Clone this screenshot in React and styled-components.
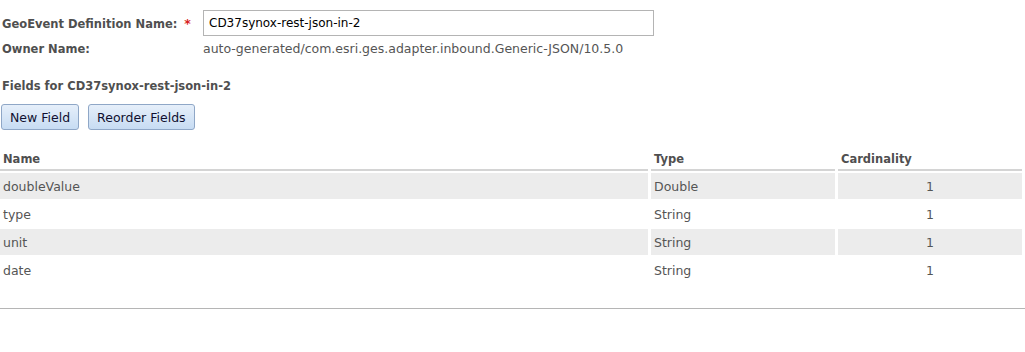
import React from 'react';
import styled, { createGlobalStyle } from 'styled-components';

const GlobalStyle = createGlobalStyle`
  body {
    margin: 0;
    background: #ffffff;
    font-family: "DejaVu Sans", Verdana, sans-serif;
  }
`;

const Page = styled.div`
  width: 1025px;
  height: 352px;
  padding-top: 10px;
  box-sizing: border-box;
  color: #555555;
  font-size: 12.5px;
`;

const FormGrid = styled.div`
  display: grid;
  grid-template-columns: 201px 451px;
  row-gap: 5px;
  padding-left: 2px;
  align-items: center;
`;

const Label = styled.div`
  font-weight: bold;
  font-size: 11.5px;
  color: #4f4f4f;
`;

const Required = styled.span`
  color: #d81e1e;
  margin-left: 7px;
  font-size: 12.5px;
`;

const TextInput = styled.input`
  height: 26px;
  box-sizing: border-box;
  border: 1px solid #b4b4b4;
  padding: 0 5px;
  font-family: inherit;
  font-size: 12px;
  color: #000000;
  outline: none;
`;

const Value = styled.div`
  color: #555555;
`;

const SectionTitle = styled.div`
  font-weight: bold;
  font-size: 11.5px;
  color: #4f4f4f;
  margin: 23px 0 0 2px;
`;

const ButtonBar = styled.div`
  display: flex;
  gap: 9px;
  margin: 11px 0 0 1px;
`;

const Button = styled.button`
  height: 26px;
  padding: 0 8px;
  border: 1px solid #8fa7c7;
  border-radius: 3px;
  background: linear-gradient(#e6effa, #c7dcf3);
  font-family: inherit;
  font-size: 12.5px;
  color: #101030;
`;

const Table = styled.div`
  display: grid;
  grid-template-columns: 648px 184px 184px;
  column-gap: 3px;
  row-gap: 2px;
  margin-top: 22px;
  width: 1022px;
`;

const HeadCell = styled.div`
  font-weight: bold;
  font-size: 11.5px;
  color: #4f4f4f;
  padding: 0 3px 3px;
  border-bottom: 2px solid #d4d4d4;
`;

const Cell = styled.div`
  height: 26px;
  display: flex;
  align-items: center;
  justify-content: ${p => (p.$center ? 'center' : 'flex-start')};
  padding: 0 3px;
  background: ${p => (p.$shaded ? '#ececec' : '#ffffff')};
`;

const Footer = styled.div`
  margin-top: 25px;
  border-top: 1px solid #b5b5b5;
`;

const fields = [
  { name: 'doubleValue', type: 'Double', cardinality: 1 },
  { name: 'type', type: 'String', cardinality: 1 },
  { name: 'unit', type: 'String', cardinality: 1 },
  { name: 'date', type: 'String', cardinality: 1 },
];

export default function App() {
  const defName = 'CD37synox-rest-json-in-2';
  return (
    <Page>
      <GlobalStyle />
      <FormGrid>
        <Label>
          GeoEvent Definition Name:<Required>*</Required>
        </Label>
        <TextInput defaultValue={defName} />
        <Label>Owner Name:</Label>
        <Value>auto-generated/com.esri.ges.adapter.inbound.Generic-JSON/10.5.0</Value>
      </FormGrid>
      <SectionTitle>Fields for {defName}</SectionTitle>
      <ButtonBar>
        <Button>New Field</Button>
        <Button>Reorder Fields</Button>
      </ButtonBar>
      <Table>
        <HeadCell>Name</HeadCell>
        <HeadCell>Type</HeadCell>
        <HeadCell>Cardinality</HeadCell>
        {fields.map((f, i) => (
          <React.Fragment key={f.name}>
            <Cell $shaded={i % 2 === 0}>{f.name}</Cell>
            <Cell $shaded={i % 2 === 0}>{f.type}</Cell>
            <Cell $shaded={i % 2 === 0} $center>{f.cardinality}</Cell>
          </React.Fragment>
        ))}
      </Table>
      <Footer />
    </Page>
  );
}
